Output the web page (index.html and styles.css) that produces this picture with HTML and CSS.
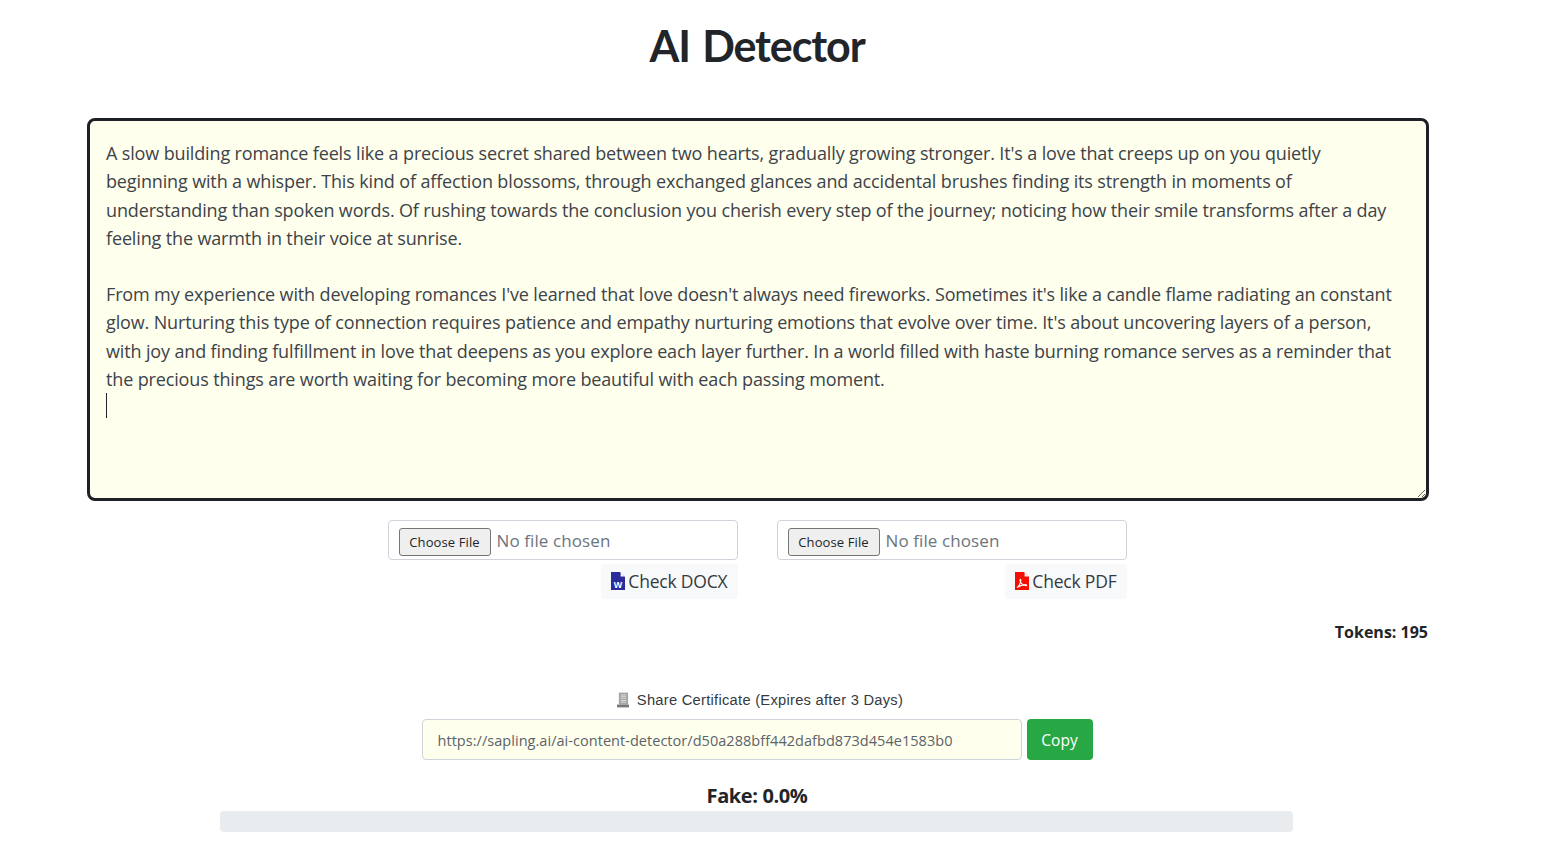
FILE: index.html
```html
<!DOCTYPE html>
<html lang="en">
  <head>
    <meta charset="UTF-8" />
    <title>AI Detector</title>
    <link rel="stylesheet" href="styles.css">
  </head>
  <body>
    <div class="page">
      <h1 class="title">AI Detector</h1>

      <div class="editor">
        <textarea class="editor-text" spellcheck="false">A slow building romance feels like a precious secret shared between two hearts, gradually growing stronger. It's a love that creeps up on you quietly
beginning with a whisper. This kind of affection blossoms, through exchanged glances and accidental brushes finding its strength in moments of
understanding than spoken words. Of rushing towards the conclusion you cherish every step of the journey; noticing how their smile transforms after a day
feeling the warmth in their voice at sunrise.

From my experience with developing romances I've learned that love doesn't always need fireworks. Sometimes it's like a candle flame radiating an constant
glow. Nurturing this type of connection requires patience and empathy nurturing emotions that evolve over time. It's about uncovering layers of a person,
with joy and finding fulfillment in love that deepens as you explore each layer further. In a world filled with haste burning romance serves as a reminder that
the precious things are worth waiting for becoming more beautiful with each passing moment.
</textarea>
        <span class="caret"></span>
      </div>

      <div class="uploads">
        <div class="upload">
          <input class="file-input" type="file">
          <button class="check-btn">
            <svg class="file-icon" viewBox="0 0 14 18">
              <path fill="#2b2b9b" d="M0 0h9l5 5v13H0z"/>
              <path fill="#fff" d="M9.600 0.400 13.600 4.400H9.600z"/>
              <text x="7" y="15.500" class="word-mark">W</text>
            </svg>
            Check DOCX
          </button>
        </div>
        <div class="upload">
          <input class="file-input" type="file">
          <button class="check-btn">
            <svg class="file-icon" viewBox="0 0 14 18">
              <path fill="#f40f02" d="M0 0h9l5 5v13H0z"/>
              <path fill="#fff" d="M9.600 0.400 13.600 4.400H9.600z"/>
              <path fill="none" stroke="#fff" stroke-width="1.100" d="M2 15.500c2-1 4-5 3.800-7.500-.2-1-1-.7-.8.500.4 2.500 3 5 6 5.200 1 0 1-1 0-1-2.500-.2-6 1-9 2.800z"/>
            </svg>
            Check PDF
          </button>
        </div>
      </div>

      <div class="tokens">Tokens: 195</div>

      <div class="share-label">
        <svg class="share-icon" viewBox="0 0 13 16">
          <path fill="#a4a4a4" d="M2 0h10v13H2z"/>
          <path fill="#dcdcdc" d="M4 2h6v1H4zM4 4h6v1H4zM4 6h6v1H4zM4 8h6v1H4zM4 10h6v1H4z"/>
          <path fill="#777" d="M0 13h13v3H0z"/>
        </svg>
        Share Certificate (Expires after 3 Days)
      </div>
      <div class="share-row">
        <input class="share-url" type="text" readonly value="https://sapling.ai/ai-content-detector/d50a288bff442dafbd873d454e1583b0">
        <button class="copy-btn">Copy</button>
      </div>

      <div class="fake-label">Fake: 0.0%</div>
      <div class="progress"></div>
    </div>
  </body>
</html>
```
FILE: styles.css
```css
html, body {
  margin: 0;
  background: #fff;
  overflow: hidden;
}

body {
  font-family: "Open Sans", "Noto Sans", sans-serif;
  color: #212529;
}

.page {
  width: 1514px;
  display: flex;
  flex-direction: column;
  align-items: center;
}

.title {
  margin: 19px 0 0;
  height: 99px;
  font-family: Lato, sans-serif;
  font-size: 43px;
  font-weight: 700;
  line-height: 53px;
  letter-spacing: -1.1px;
  word-spacing: 3px;
  color: #212529;
}

.editor {
  position: relative;
  width: 1342px;
  height: 383px;
  margin-left: 2px;
}

.editor-text {
  display: block;
  box-sizing: border-box;
  width: 100%;
  height: 100%;
  padding: 18.200px 16px 18px;
  border: 3px solid #1d2125;
  border-radius: 8px;
  outline: none;
  background: #ffffee;
  color: #3d4349;
  font-family: "Open Sans", sans-serif;
  font-size: 18px;
  line-height: 28.200px;
  letter-spacing: -0.14px;
  white-space: pre;
  overflow: hidden;
}

.caret {
  position: absolute;
  left: 19px;
  top: 275px;
  width: 1px;
  height: 25px;
  background: #212529;
}

.uploads {
  display: flex;
  gap: 39px;
  margin-top: 19px;
}

.upload {
  width: 350px;
  display: flex;
  flex-direction: column;
  align-items: flex-end;
  gap: 4px;
}

.file-input {
  box-sizing: border-box;
  width: 100%;
  height: 40px;
  padding: 7px 10px 5px;
  border: 1px solid #ced4da;
  border-radius: 4px;
  font-family: "Open Sans", sans-serif;
  font-size: 17px;
  letter-spacing: 0.1px;
  color: #6c757d;
  background: #fff;
}

.file-input::file-selector-button {
  width: 92px;
  height: 28px;
  margin-right: 6px;
  padding: 0;
  border: 1px solid #767676;
  border-radius: 3px;
  background: #efefef;
  font-family: "Open Sans", sans-serif;
  font-size: 13px;
  letter-spacing: 0.1px;
  color: #212529;
}

.check-btn {
  display: flex;
  align-items: center;
  gap: 3px;
  height: 35px;
  padding: 0 10px 2px;
  border: 0;
  border-radius: 4px;
  background: #f8f9fa;
  font-family: "Open Sans", sans-serif;
  font-size: 17.500px;
  letter-spacing: -0.2px;
  color: #343a40;
}

.file-icon {
  width: 14px;
  height: 18px;
}

.word-mark {
  font-family: "Liberation Sans", sans-serif;
  font-size: 9px;
  font-weight: 700;
  fill: #fff;
  text-anchor: middle;
}

.tokens {
  align-self: flex-end;
  margin: 23px 86px 0 0;
  font-size: 16px;
  font-weight: 700;
  line-height: 20px;
}

.share-label {
  display: flex;
  align-items: center;
  gap: 8px;
  margin: 48px 0 0 6px;
  font-family: "Liberation Sans", sans-serif;
  font-size: 14.700px;
  line-height: 20px;
  letter-spacing: 0.27px;
  color: #343a40;
}

.share-icon {
  width: 12px;
  height: 16px;
}

.share-row {
  display: flex;
  gap: 5px;
  margin-top: 9px;
}

.share-url {
  box-sizing: border-box;
  width: 600px;
  height: 41px;
  padding: 2px 15px 0;
  border: 1px solid #ced4da;
  border-radius: 4px;
  outline: none;
  background: #ffffee;
  font-family: "Open Sans", sans-serif;
  font-size: 14.500px;
  letter-spacing: 0.04px;
  color: #5c6369;
}

.copy-btn {
  width: 66px;
  height: 41px;
  padding: 0;
  border: 0;
  border-radius: 4px;
  background: #28a745;
  color: #fff;
  font-family: "Open Sans", sans-serif;
  font-size: 15.500px;
}

.fake-label {
  margin-top: 22px;
  font-size: 20px;
  font-weight: 700;
  line-height: 28px;
  letter-spacing: -0.4px;
}

.progress {
  width: 1073px;
  height: 21px;
  margin-top: 1px;
  margin-right: 2px;
  border-radius: 4px;
  background: #e9ecef;
}
```
